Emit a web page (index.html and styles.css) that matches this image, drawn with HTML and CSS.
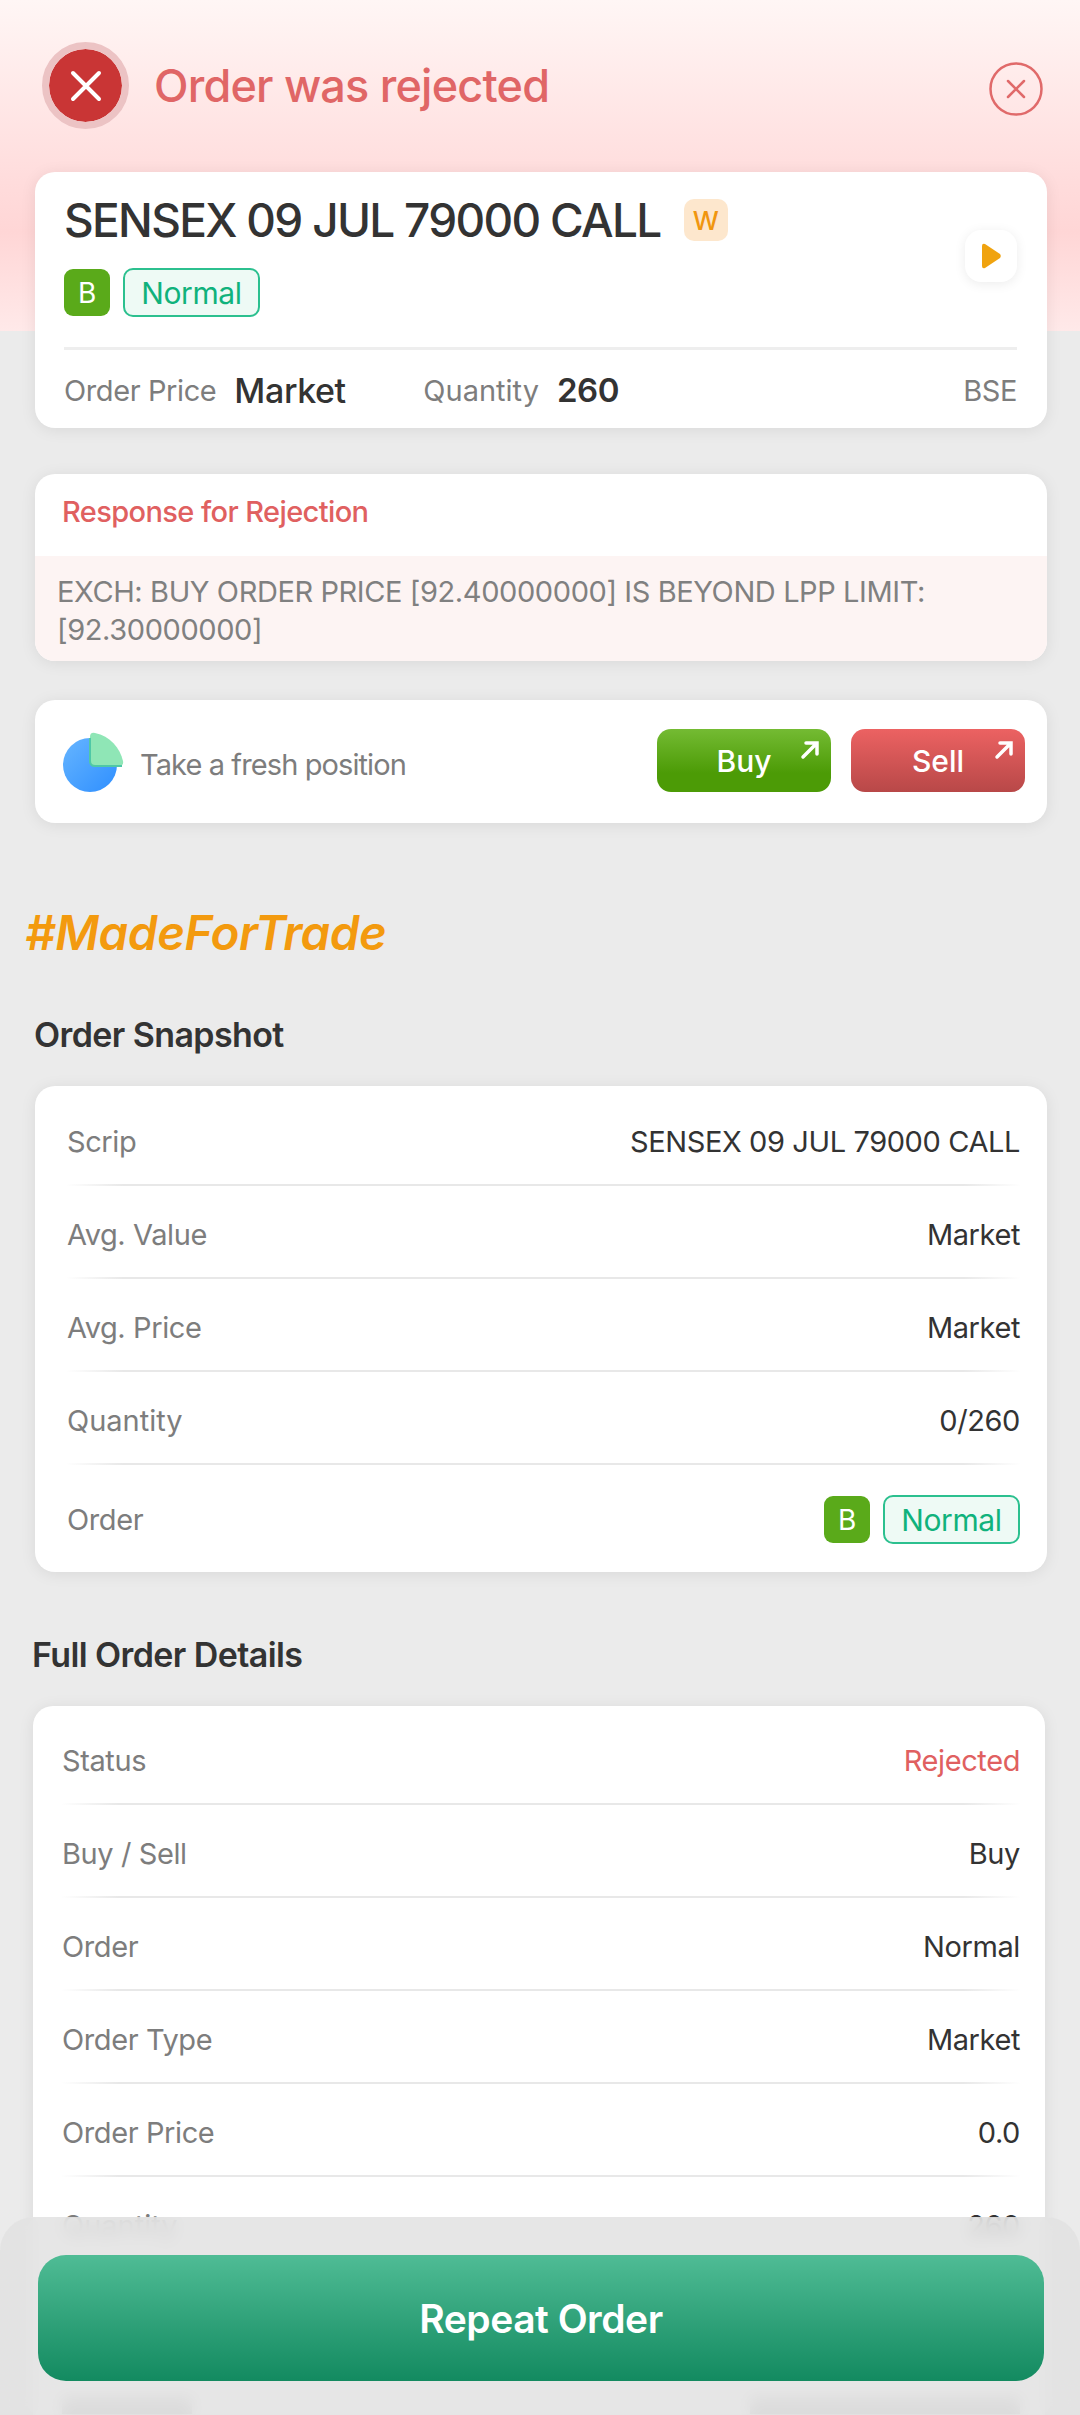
FILE: index.html
```html
<!DOCTYPE html>
<html lang="en">
<head>
  <meta charset="UTF-8" />
  <meta name="viewport" content="width=device-width, initial-scale=1.0" />
  <title>Order was rejected</title>
  <link rel="stylesheet" href="styles.css">
</head>
<body>
<div class="hero">
  <div class="status-icon">
    <svg width="32" height="32" viewBox="0 0 32 32"><path d="M3 3 L29 29 M29 3 L3 29" stroke="#fff" stroke-width="4" stroke-linecap="round"/></svg>
  </div>
  <h1 class="hero-title">Order was rejected</h1>
  <button class="close-btn">
    <svg width="54" height="54" viewBox="0 0 54 54"><circle cx="27" cy="27" r="25.5" fill="none" stroke="#e06a6a" stroke-width="2.5"/><path d="M19 19 L35 35 M35 19 L19 35" stroke="#e06a6a" stroke-width="2.5" stroke-linecap="round"/></svg>
  </button>
</div>

<div class="card summary">
  <div class="summary-top">
    <div>
      <div class="scrip-line">
        <span class="scrip-name">SENSEX 09 JUL 79000 CALL</span>
        <span class="expiry-tag">W</span>
      </div>
      <div class="tags">
        <span class="side-tag">B</span>
        <span class="type-tag">Normal</span>
      </div>
    </div>
    <span class="play-btn">
      <svg width="19" height="26" viewBox="0 0 19 26"><path d="M3 1 L18 11 Q19.500 13 18 15 L3 25 Q0 26 0 23 L0 3 Q0 0 3 1 Z" fill="#f0a30f"/></svg>
    </span>
  </div>
  <div class="summary-bottom">
    <span class="muted">Order Price</span>
    <span class="summary-price">Market</span>
    <span class="muted qty-label">Quantity</span>
    <span class="summary-qty">260</span>
    <span class="muted summary-exch">BSE</span>
  </div>
</div>

<div class="card reason">
  <div class="reason-title">Response for Rejection</div>
  <div class="reason-body">EXCH: BUY ORDER PRICE [92.40000000] IS BEYOND LPP LIMIT: [92.30000000]</div>
</div>

<div class="card fresh">
  <svg class="fresh-icon" width="62" height="62" viewBox="0 0 62 62">
    <defs>
      <linearGradient id="pieBlue" x1="0" y1="0" x2="1" y2="1"><stop offset="0" stop-color="#66b5ff"/><stop offset="1" stop-color="#2f8fff"/></linearGradient>
    </defs>
    <circle cx="28" cy="34" r="27" fill="url(#pieBlue)"/>
    <path d="M28 6 Q28 1 33 2 C48 5 58 17 61 30 Q62 35 57 35 L33 35 Q28 35 28 30 Z" fill="#8fe6b6"/>
    <path d="M28 7 L28 30 Q28 35 33 35 L60 35" fill="none" stroke="#4fc8a6" stroke-width="2"/>
  </svg>
  <span class="muted fresh-text">Take a fresh position</span>
  <button class="trade-btn buy">Buy
    <svg class="trade-arrow" width="20" height="20" viewBox="0 0 20 20"><path d="M3 17 L16 4 M6 3 L17 3 L17 14" fill="none" stroke="#fff" stroke-width="3.500" stroke-linecap="round"/></svg>
  </button>
  <button class="trade-btn sell">Sell
    <svg class="trade-arrow" width="20" height="20" viewBox="0 0 20 20"><path d="M3 17 L16 4 M6 3 L17 3 L17 14" fill="none" stroke="#fff" stroke-width="3.500" stroke-linecap="round"/></svg>
  </button>
</div>

<div class="tagline">#MadeForTrade</div>

<h2 class="section-title snapshot-title">Order Snapshot</h2>
<div class="card detail snapshot">
  <div class="row"><span class="muted">Scrip</span><span>SENSEX 09 JUL 79000 CALL</span></div>
  <div class="row"><span class="muted">Avg. Value</span><span>Market</span></div>
  <div class="row"><span class="muted">Avg. Price</span><span>Market</span></div>
  <div class="row"><span class="muted qty-label">Quantity</span><span>0/260</span></div>
  <div class="row row-tags">
    <span class="muted">Order</span>
    <span class="tags"><span class="side-tag">B</span><span class="type-tag">Normal</span></span>
  </div>
</div>

<h2 class="section-title full-title">Full Order Details</h2>
<div class="card detail full">
  <div class="row"><span class="muted">Status</span><span class="rejected">Rejected</span></div>
  <div class="row"><span class="muted">Buy / Sell</span><span>Buy</span></div>
  <div class="row"><span class="muted">Order</span><span>Normal</span></div>
  <div class="row"><span class="muted">Order Type</span><span>Market</span></div>
  <div class="row"><span class="muted">Order Price</span><span>0.0</span></div>
  <div class="row"><span class="muted qty-label">Quantity</span><span>260</span></div>
  <div class="row"></div>
  <!-- only seen through the footer blur -->
  <div class="row"><span class="ghost ghost-label"></span><span class="ghost ghost-value"></span></div>
</div>

<div class="footer">
  <button class="repeat-btn">Repeat Order</button>
</div>
</body>
</html>
```

FILE: styles.css
```css
* {
  box-sizing: border-box;
}

html, body {
  height: 2415px;
  overflow: hidden;
}

body {
  margin: 0;
  background: #ebebeb;
  font-family: "Inter", "Liberation Sans", sans-serif;
  font-size: 29px;
  letter-spacing: -0.4px;
  color: #333;
}

button {
  border: none;
  font-family: inherit;
  cursor: pointer;
}

.muted {
  color: #7d7d7d;
}

.qty-label {
  letter-spacing: 0;
}

/* top banner */
.hero {
  height: 331px;
  padding: 42px 37px 0 42px;
  display: flex;
  align-items: flex-start;
  background: linear-gradient(#fff6f5 0%, #ffdcdc 55%, #ffd6d6 70%, #ffe9e9 100%);
}

.status-icon {
  width: 87px;
  height: 87px;
  border-radius: 50%;
  background: #c93535;
  border: 7px solid #ecc3c4;
  background-clip: padding-box;
  display: flex;
  align-items: center;
  justify-content: center;
}

.hero-title {
  margin: 0 0 0 25px;
  height: 87px;
  line-height: 87px;
  font-size: 45px;
  font-weight: 500;
  letter-spacing: -0.8px;
  color: #e06666;
  flex: 1;
}

.close-btn {
  background: none;
  padding: 0;
  margin-top: 20px;
  width: 54px;
  height: 54px;
}

/* cards */
.card {
  background: #fff;
  margin: 0 33px 0 35px;
  border-radius: 20px;
  box-shadow: 0 2px 16px rgba(0,0,0,0.08);
}

.summary {
  margin-top: -159px;
  height: 256px;
  padding: 0 30px 0 29px;
  position: relative;
}

.summary-top {
  height: 178px;
  padding-top: 20px;
  display: flex;
  align-items: flex-start;
  justify-content: space-between;
  border-bottom: 3px solid #eee;
}

.scrip-line {
  display: flex;
  align-items: center;
  gap: 23px;
  height: 56px;
  margin-bottom: 20px;
}

.scrip-name {
  font-size: 46px;
  font-weight: 500;
  letter-spacing: -1.7px;
}

.expiry-tag {
  width: 44px;
  height: 42px;
  border-radius: 10px;
  background: #fde7cd;
  color: #f0960f;
  font-size: 26px;
  font-weight: 500;
  display: flex;
  align-items: center;
  justify-content: center;
}

.tags {
  display: flex;
  align-items: center;
  gap: 13px;
}

.side-tag {
  width: 46px;
  height: 47px;
  border-radius: 9px;
  background: #5aaa1a;
  color: #fff;
  font-size: 28px;
  display: flex;
  align-items: center;
  justify-content: center;
}

.type-tag {
  height: 49px;
  width: 137px;
  border: 2px solid #2cc08f;
  border-radius: 10px;
  background: #eefaf5;
  color: #10b27c;
  font-size: 30px;
  display: flex;
  align-items: center;
  justify-content: center;
}

.play-btn {
  width: 52px;
  height: 52px;
  border-radius: 16px;
  background: #fff;
  box-shadow: 0 2px 12px rgba(0,0,0,0.08);
  display: flex;
  align-items: center;
  justify-content: center;
  margin-top: 38px;
}

.summary-bottom {
  height: 78px;
  padding-top: 2px;
  display: flex;
  align-items: center;
}

.summary-price {
  margin-left: 18px;
  font-size: 34px;
  font-weight: 500;
  width: 189px;
}

.summary-qty {
  margin-left: 18px;
  font-size: 33px;
  font-weight: 600;
}

.summary-exch {
  margin-left: auto;
}

.reason {
  margin-top: 46px;
  height: 187px;
  overflow: hidden;
}

.reason-title {
  height: 82px;
  padding-left: 27px;
  line-height: 76px;
  font-size: 29px;
  font-weight: 500;
  letter-spacing: -0.6px;
  color: #e06060;
}

.reason-body {
  height: 105px;
  padding: 17px 40px 0 22px;
  background: #fdf4f3;
  color: #808080;
  line-height: 38px;
}

.fresh {
  margin-top: 39px;
  height: 123px;
  padding: 0 22px 0 27px;
  display: flex;
  align-items: center;
  gap: 16px;
}

.fresh-text {
  flex: 1;
  padding-top: 6px;
  letter-spacing: -0.9px;
}

.trade-btn {
  position: relative;
  width: 174px;
  height: 63px;
  border-radius: 14px;
  color: #fff;
  font-size: 30px;
  font-weight: 500;
  margin: -2px 0 0 5px;
}

.sell {
  margin-left: 4px;
  background: linear-gradient(#ec6262, #b84848);
}

.buy {
  background: linear-gradient(#74bb33, #4c9b06 70%);
}

.trade-arrow {
  position: absolute;
  top: 11px;
  right: 11px;
}

.tagline {
  margin: 81px 0 0 25px;
  font-size: 47.5px;
  line-height: 58px;
  font-weight: 600;
  font-style: italic;
  color: #f39a0e;
}

.section-title {
  margin: 0;
  font-size: 34px;
  font-weight: 600;
  line-height: 44px;
  letter-spacing: -0.6px;
  color: #333;
}

.snapshot-title {
  margin: 51px 0 29px 34px;
}

.full-title {
  margin: 61px 0 29px 32px;
}

.row {
  height: 93px;
  padding-top: 6px;
  display: flex;
  align-items: center;
  justify-content: space-between;
  border-bottom: 2px solid transparent;
  border-image: linear-gradient(90deg, transparent, #e8e8e8 6%, #e8e8e8 94%, transparent) 1;
}

.row:last-child,
.row-tags {
  border-bottom: none;
  border-image: none;
}

.detail {
  padding: 7px 27px 0 32px;
}

.snapshot {
  height: 486px;
}

.snapshot .row-tags {
  height: 103px;
}

.full {
  margin: 0 35px 0 33px;
  padding-top: 6px;
  padding-left: 29px;
  padding-right: 25px;
}

.rejected {
  color: #e06060;
}

.ghost {
  height: 16px;
  margin-top: -14px;
  background: #b4b4b4;
}

.ghost-label {
  width: 130px;
}

.ghost-value {
  width: 270px;
}

/* fixed bottom action */
.footer {
  position: fixed;
  left: 0;
  right: 0;
  bottom: 0;
  height: 198px;
  padding: 38px 36px 0 38px;
  background: rgba(226,226,226,0.85);
  backdrop-filter: blur(8px);
  border-radius: 34px 34px 0 0;
}

.repeat-btn {
  width: 100%;
  height: 126px;
  border-radius: 28px;
  background: linear-gradient(#4fbc95, #138a60);
  color: #fff;
  font-size: 39px;
  font-weight: 600;
  letter-spacing: -0.5px;
}
```
